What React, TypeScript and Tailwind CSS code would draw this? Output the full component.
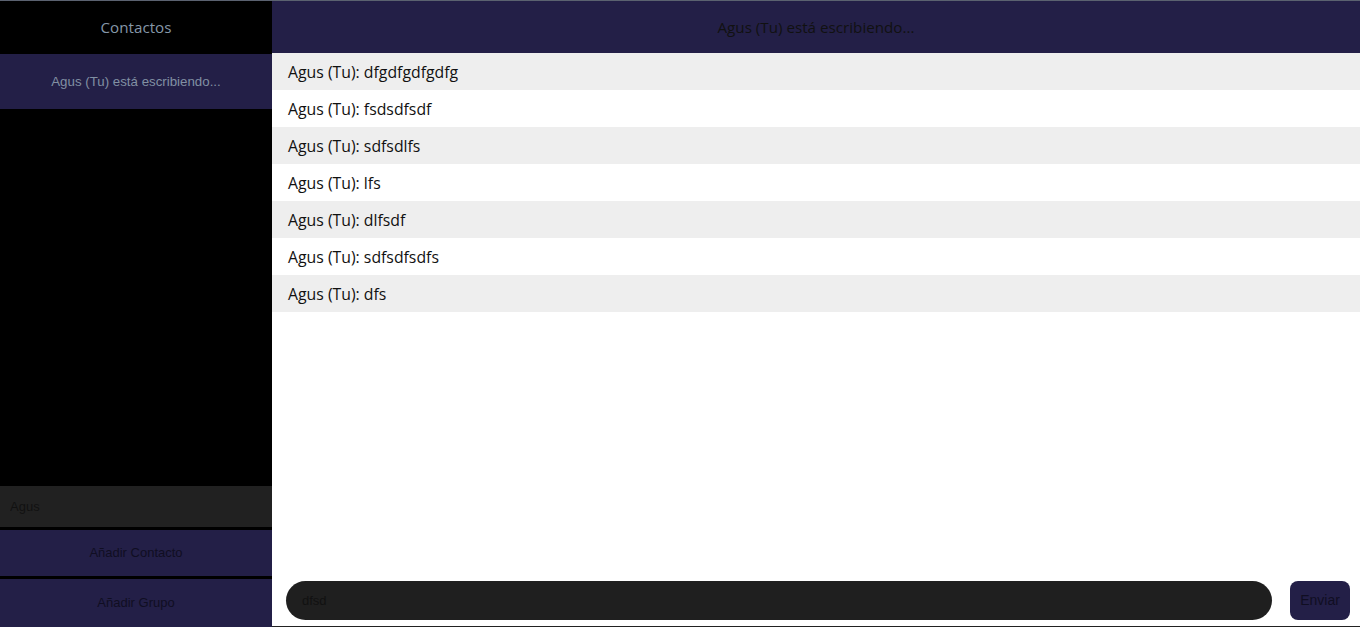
import React from 'react';

const messages = ['dfgdfgdfgdfg', 'fsdsdfsdf', 'sdfsdlfs', 'lfs', 'dlfsdf', 'sdfsdfsdfs', 'dfs'];

export default function App() {
  return (
    <div className="flex h-[627px] w-full overflow-hidden border-t border-[#5b6270] bg-white">
      {/* Sidebar */}
      <aside className="flex w-[272px] shrink-0 flex-col bg-black">
        <div className="flex h-[53px] items-center justify-center text-[15.2px] text-[#8597a8] [font-family:'Open_Sans',sans-serif]">
          Contactos
        </div>
        <div className="flex h-[55px] items-center justify-center bg-[#231f47] text-[13.3px] text-[#8190a3] [font-family:'Liberation_Sans',Arial,sans-serif]">
          Agus (Tu) está escribiendo...
        </div>
        <div className="flex-1" />
        <input
          defaultValue="Agus"
          className="h-[41px] w-full bg-[#212121] px-[10px] text-[13px] text-[#111] outline-none [font-family:'Liberation_Sans',Arial,sans-serif]"
        />
        <button className="mt-[3px] h-[46px] w-full bg-[#231f47] text-[13px] text-[#100e22] [font-family:'Liberation_Sans',Arial,sans-serif]">
          Añadir Contacto
        </button>
        <button className="mt-[3px] h-[48px] w-full bg-[#231f47] text-[13px] text-[#100e22] [font-family:'Liberation_Sans',Arial,sans-serif]">
          Añadir Grupo
        </button>
      </aside>

      {/* Chat */}
      <main className="flex flex-1 flex-col border-b border-[#222]">
        <div className="flex h-[52px] items-center justify-center bg-[#231f47] text-[15.2px] text-[#111] [font-family:'Open_Sans',sans-serif]">
          Agus (Tu) está escribiendo...
        </div>
        <div className="flex-1">
          {messages.map((m, i) => (
            <div
              key={i}
              className={`flex h-[37px] items-center px-4 pt-[2px] text-[15.8px] text-[#111] [font-family:'Open_Sans',sans-serif] ${i % 2 === 0 ? 'bg-[#eeeeee]' : 'bg-white'}`}
            >
              Agus (Tu): {m}
            </div>
          ))}
        </div>
        <div className="flex items-center gap-[18px] pb-[6px] pl-[14px] pr-[10px]">
          <input
            defaultValue="dfsd"
            className="h-[39px] flex-1 rounded-full bg-[#1f1f1f] px-4 text-[13px] text-[#111] outline-none [font-family:'Liberation_Sans',Arial,sans-serif]"
          />
          <button className="h-[39px] w-[60px] rounded-lg bg-[#231f47] text-[14px] text-[#100e22] [font-family:'Liberation_Sans',Arial,sans-serif]">
            Enviar
          </button>
        </div>
      </main>
    </div>
  );
}
